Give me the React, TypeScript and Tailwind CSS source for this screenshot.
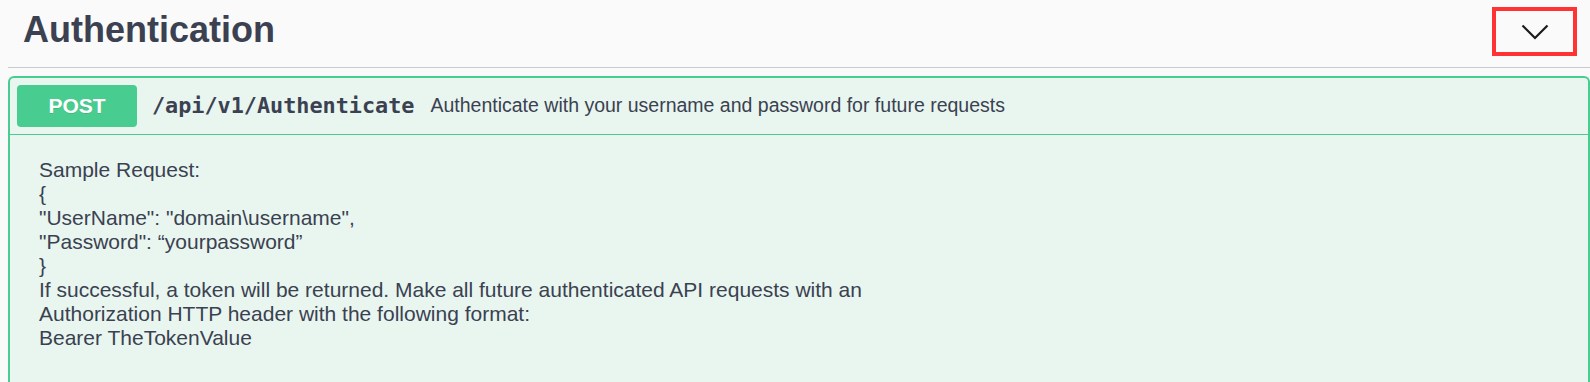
const lines = [
  "Sample Request:",
  "{",
  '"UserName": "domain\\username",',
  '"Password": \u201Cyourpassword\u201D',
  "}",
  "If successful, a token will be returned. Make all future authenticated API requests with an",
  "Authorization HTTP header with the following format:",
  "Bearer TheTokenValue",
];

function Chevron() {
  return (
    <svg width="28" height="16" viewBox="0 0 28 16" fill="none">
      <path d="M1.5 1.5 L14 14 L26.5 1.5" stroke="#1b1b1b" strokeWidth="2.2" />
    </svg>
  );
}

export default function App() {
  return (
    <div className="min-h-screen bg-[#fafafa] pl-2 font-['Liberation_Sans',Arial,sans-serif] text-[#3b4151]">
      <div className="flex h-[68px] items-start justify-between border-b-[1.5px] border-[#c9cace]">
        <h4 className="pl-[15px] pt-[12px] text-[36px] font-bold leading-[36px]">
          Authentication
        </h4>
        <button className="mr-[13px] mt-[7px] flex h-[49px] w-[85px] items-center justify-center border-4 border-[#ff3333]">
          <Chevron />
        </button>
      </div>

      <div className="mt-2 overflow-hidden rounded-[6px] rounded-b-none border-2 border-b-0 border-[#49cc90] bg-[#e8f6ef]">
        <div className="flex items-center border-b-[1.5px] border-[#49cc90] px-[7px] py-[7px]">
          <span className="flex h-[42px] w-[120px] items-center justify-center rounded-[4px] bg-[#49cc90] text-[21px] font-bold text-white [text-shadow:0_1px_0_rgba(0,0,0,0.1)]">
            POST
          </span>
          <span className="ml-[15px] font-['DejaVu_Sans_Mono',monospace] text-[21.8px] font-bold">
            /api/v1/Authenticate
          </span>
          <span className="ml-[16px] text-[19.5px]">
            Authenticate with your username and password for future requests
          </span>
        </div>
        <div className="px-[29px] pb-[40px] pt-[23px] text-[21px] leading-[24px]">
          {lines.map((line, i) => (
            <div key={i}>{line}</div>
          ))}
        </div>
      </div>
    </div>
  );
}
